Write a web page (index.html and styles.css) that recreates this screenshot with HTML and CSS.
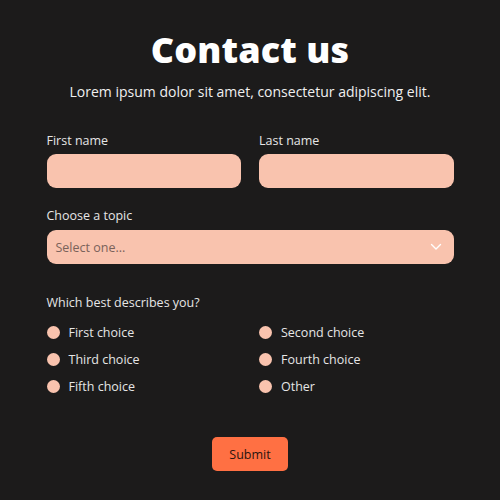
FILE: index.html
```html
<!DOCTYPE html>
<html>
<head>
<meta charset="utf-8">
<link rel="stylesheet" href="styles.css">
</head>
<body>
<main class="page">
  <h1 class="title">Contact us</h1>
  <p class="subtitle">Lorem ipsum dolor sit amet, consectetur adipiscing elit.</p>
  <form class="form">
    <div class="row">
      <label class="field">
        <span class="label">First name</span>
        <span class="input"></span>
      </label>
      <label class="field">
        <span class="label">Last name</span>
        <span class="input"></span>
      </label>
    </div>
    <label class="field topic">
      <span class="label">Choose a topic</span>
      <span class="input select">
        <span class="placeholder">Select one...</span>
        <svg class="chev" width="12" height="8" viewBox="0 0 12 8"><path d="M1.5 1.5 L6 6 L10.5 1.5" fill="none" stroke="#fff" stroke-width="1.4" stroke-linecap="round" stroke-linejoin="round"/></svg>
      </span>
    </label>
    <div class="question">Which best describes you?</div>
    <div class="choices">
      <div class="choice"><span class="dot"></span>First choice</div>
      <div class="choice"><span class="dot"></span>Second choice</div>
      <div class="choice"><span class="dot"></span>Third choice</div>
      <div class="choice"><span class="dot"></span>Fourth choice</div>
      <div class="choice"><span class="dot"></span>Fifth choice</div>
      <div class="choice"><span class="dot"></span>Other</div>
    </div>
    <div class="actions">
      <span class="submit">Submit</span>
    </div>
  </form>
</main>
</body>
</html>
```

FILE: styles.css
```css
html, body {
  margin: 0;
  padding: 0;
  background: #1c1b1b;
}
body {
  font-family: "Open Sans", "Lato", sans-serif;
  color: #e6e6e6;
}
.page {
  width: 407px;
  margin: 0 auto;
  padding-top: 28px;
}
.title {
  margin: 0;
  text-align: center;
  font-size: 36px;
  line-height: 44px;
  font-weight: 800;
  color: #ffffff;
  letter-spacing: 0.1px;
}
.subtitle {
  margin: 10px 0 0;
  text-align: center;
  font-size: 14px;
  line-height: 20px;
  color: #f0f0f0;
  letter-spacing: 0;
}
.form {
  margin-top: 31px;
}
.row {
  display: grid;
  grid-template-columns: 1fr 1fr;
  column-gap: 18px;
}
.field {
  display: flex;
  flex-direction: column;
}
.label {
  font-size: 12.5px;
  line-height: 16px;
  color: #e6e6e6;
  margin-bottom: 5px;
}
.input {
  display: block;
  height: 34px;
  border-radius: 9px;
  background: #f9c3ae;
}
.topic {
  margin-top: 20px;
}
.topic .label {
  margin-bottom: 6px;
}
.select {
  display: flex;
  align-items: center;
  justify-content: space-between;
  padding: 0 12px 0 9px;
}
.placeholder {
  font-size: 12.5px;
  color: #7a625a;
}
.question {
  margin-top: 31px;
  font-size: 12.5px;
  line-height: 16px;
  color: #e6e6e6;
}
.choices {
  margin-top: 13px;
  display: grid;
  grid-template-columns: 1fr 1fr;
  column-gap: 18px;
  row-gap: 11px;
}
.choice {
  display: flex;
  align-items: center;
  height: 16px;
  font-size: 12.5px;
  color: #e6e6e6;
}
.dot {
  width: 13px;
  height: 13px;
  border-radius: 50%;
  background: #f9c3ae;
  margin-right: 9px;
  flex: none;
}
.actions {
  display: flex;
  justify-content: center;
  margin-top: 43px;
}
.submit {
  display: flex;
  align-items: center;
  justify-content: center;
  width: 76px;
  height: 34px;
  border-radius: 5px;
  background: #ff7043;
  color: #2a1410;
  font-size: 12.5px;
}
```
